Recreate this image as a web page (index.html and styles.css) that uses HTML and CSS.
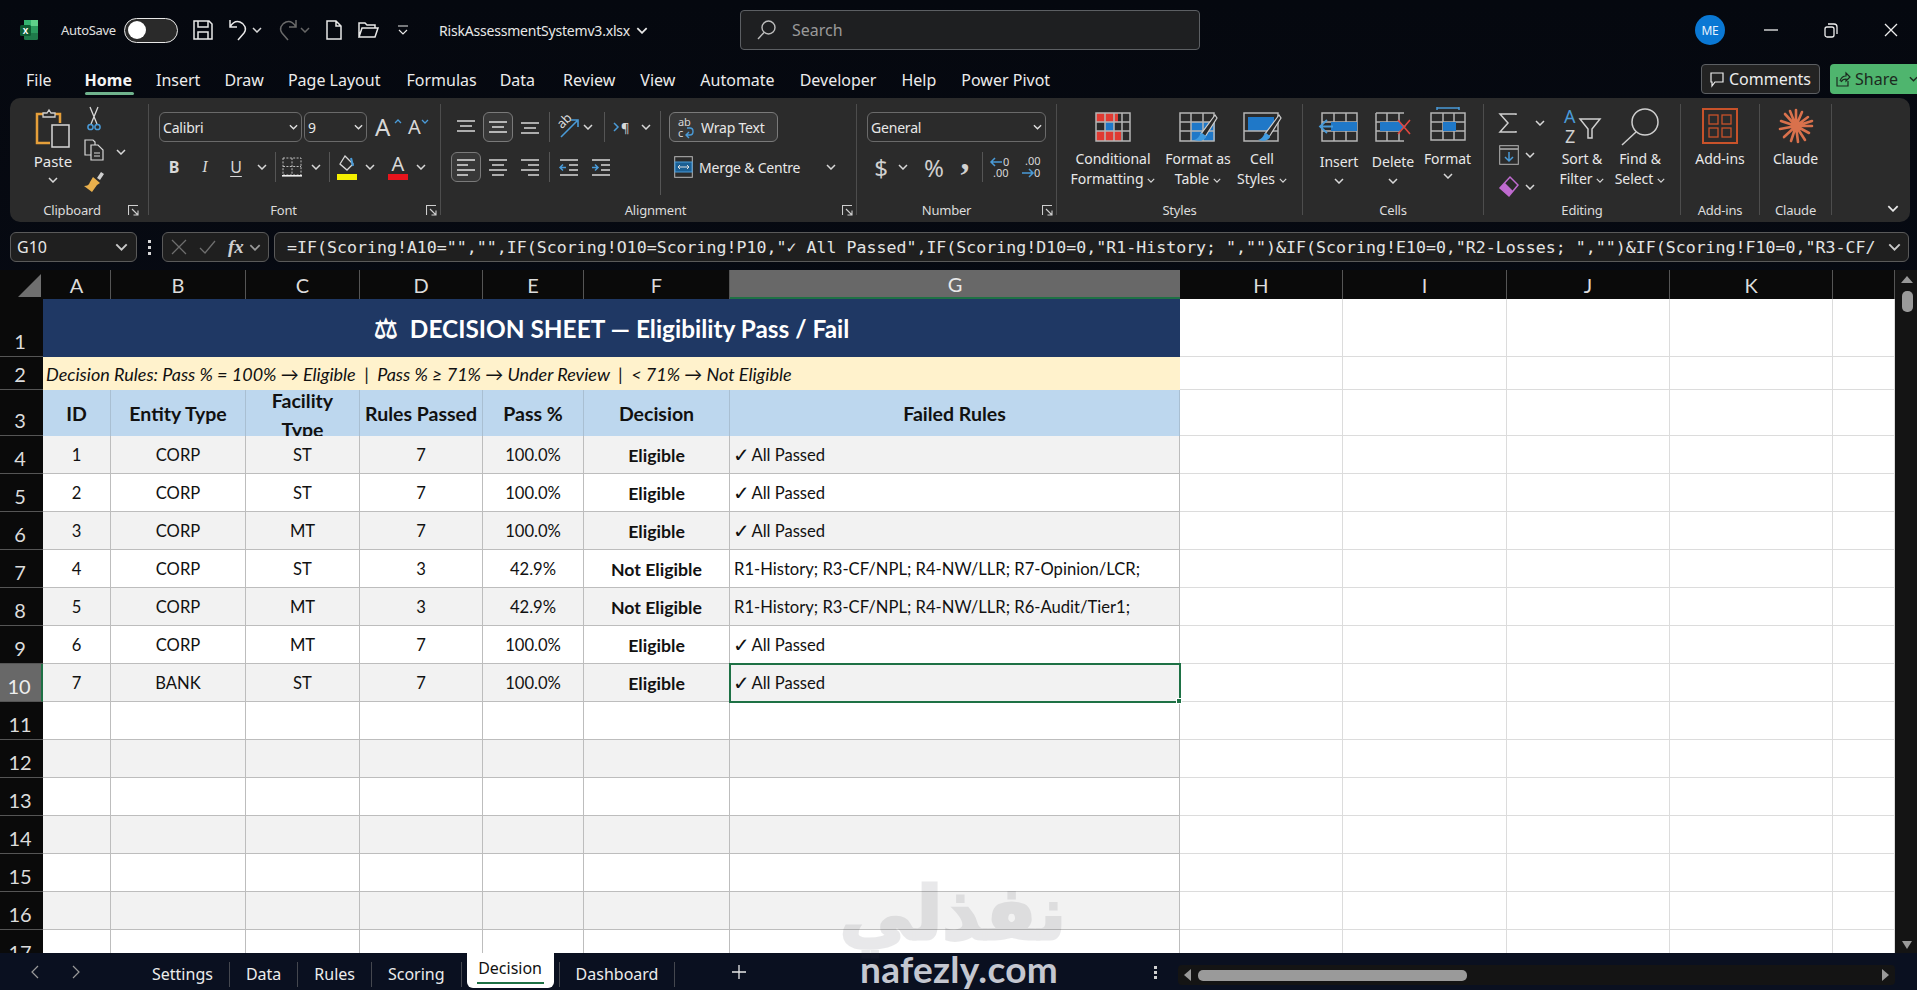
FILE: index.html
```html
<!DOCTYPE html>
<html lang="en">
<head>
<meta charset="utf-8">
<title>RiskAssessmentSystemv3.xlsx - Excel</title>
<link rel="stylesheet" href="styles.css">
</head>
<body>
<svg class="defs" width="0" height="0" aria-hidden="true">
  <symbol id="cv" viewBox="0 0 10 6"><path d="M1 1l4 4 4-4" fill="none" stroke="currentColor" stroke-width="1.5"/></symbol>
  <symbol id="launch" viewBox="0 0 11 11"><path d="M.5 10V.5H10M4 4l6 6M10 5.5V10H5.5" fill="none" stroke="#cfcfcf" stroke-width="1.1"/></symbol>
</svg>
<div class="app">
  <header class="titlebar">
    <div class="tb-left">
      <svg class="logo" width="18" height="20" viewBox="0 0 18 20"><rect x="4" y="0" width="14" height="20" rx="1.5" fill="#1f7a4a"/><rect x="4" y="0" width="7" height="6" fill="#33b36f"/><rect x="11" y="0" width="7" height="6" fill="#5fd08a"/><rect x="11" y="6" width="7" height="7" fill="#2b9a5e"/><rect x="0" y="5" width="11" height="11" rx="1.5" fill="#0d5c33"/><text x="5.5" y="14" class="logo-x">x</text></svg>
      <span class="autosave">AutoSave</span>
      <span class="toggle"><span class="knob"></span></span>
      <svg class="ml15" width="20" height="20" viewBox="0 0 20 20" fill="none" stroke="#e8e8e8" stroke-width="1.5"><path d="M1 1h15l3 3v15H1zM5 1v6h10V1M5 19v-7h10v7"/></svg>
      <svg class="ml16" width="20" height="22" viewBox="0 0 20 22" fill="none" stroke="#e8e8e8" stroke-width="1.5"><path d="M1 1v7h7M1 8c3-5 7-6 10-5 5 2 7 7 4 11l-6 7"/></svg>
      <svg class="cv ml3" width="10" height="6"><use href="#cv"/></svg>
      <svg class="ml15" width="20" height="22" viewBox="0 0 20 22" fill="none" stroke="#6a6a6a" stroke-width="1.5"><path d="M19 1v7h-7M19 8c-3-5-7-6-10-5C4 5 2 10 5 14l6 7"/></svg>
      <svg class="cv dim ml3" width="10" height="6"><use href="#cv"/></svg>
      <svg class="ml16" width="16" height="20" viewBox="0 0 16 20" fill="none" stroke="#e8e8e8" stroke-width="1.5"><path d="M1 1h9l5 5v13H1zM10 1v5h5"/></svg>
      <svg class="ml16" width="21" height="16" viewBox="0 0 21 16" fill="none" stroke="#e8e8e8" stroke-width="1.5"><path d="M1 15V1h6l2 2h8v3M1 15l3-9h16l-3 9z"/></svg>
      <svg class="ml18" width="12" height="10" viewBox="0 0 12 10" fill="none" stroke="#e8e8e8" stroke-width="1.2"><path d="M1 1h10M2 5l4 4 4-4"/></svg>
      <span class="filename">RiskAssessmentSystemv3.xlsx</span>
      <svg class="cv-file" width="12" height="7"><use href="#cv"/></svg>
    </div>
    <div class="search">
      <svg width="19" height="20" viewBox="0 0 19 20" fill="none" stroke="#bdbdbd" stroke-width="1.4"><circle cx="11.5" cy="7.5" r="6.5"/><path d="M7 12.5L1 19"/></svg>
      <span>Search</span>
    </div>
    <div class="tb-right">
      <span class="avatar">ME</span>
      <svg class="win" width="14" height="2" viewBox="0 0 14 2"><path d="M0 1h14" stroke="#eee" stroke-width="1.3"/></svg>
      <svg class="win" width="14" height="15" viewBox="0 0 14 15" fill="none" stroke="#eee" stroke-width="1.3"><rect x="1" y="4" width="9" height="10" rx="2"/><path d="M4 1h6a3 3 0 0 1 3 3v7"/></svg>
      <svg class="win" width="14" height="14" viewBox="0 0 14 14" stroke="#eee" stroke-width="1.3"><path d="M1 1l12 12M13 1L1 13"/></svg>
    </div>
  </header>

  <nav class="tabs">
    <a class="tab file">File</a>
    <a class="tab on">Home</a>
    <a class="tab tight">Insert</a>
    <a class="tab tight">Draw</a>
    <a class="tab loose">Page Layout</a>
    <a class="tab tight2">Formulas</a>
    <a class="tab loose3">Data</a>
    <a class="tab">Review</a>
    <a class="tab">View</a>
    <a class="tab">Automate</a>
    <a class="tab">Developer</a>
    <a class="tab">Help</a>
    <a class="tab">Power Pivot</a>
    <button class="comments"><svg width="14" height="15" viewBox="0 0 14 15" fill="none" stroke="#eee" stroke-width="1.2"><path d="M1 1h12v9H5l-3 4v-4H1z"/></svg>Comments</button>
    <button class="share"><svg width="14" height="15" viewBox="0 0 14 15" fill="none" stroke="#1c2a20" stroke-width="1.2"><path d="M1 5v9h11V9M4 9c1-3 3-5 6-5V1l4 4-4 4V7c-2 0-4 1-5 3"/></svg>Share<svg class="cv ml6" width="9" height="6"><use href="#cv"/></svg></button>
  </nav>

  <section class="ribbon">
    <div class="grp g-clip">
      <div class="body clip-body">
        <div class="big paste">
          <svg width="36" height="40" viewBox="0 0 36 40" fill="none"><path d="M10 6H2v29h13" stroke="#e59f3a" stroke-width="2.5"/><path d="M20 6h5v9" stroke="#e59f3a" stroke-width="2.5"/><path d="M8 9V5h4l2-3 2 3h4v4z" stroke="#cfcfcf" stroke-width="1.3" fill="#2b2b2b"/><rect x="17" y="17" width="17" height="22" stroke="#d8d8d8" stroke-width="1.5" fill="#2b2b2b"/></svg>
          <span class="t paste-t">Paste</span>
          <svg class="cv" width="10" height="6"><use href="#cv"/></svg>
        </div>
        <div class="clip-tools">
          <div class="line"><svg class="tool" width="14" height="26" viewBox="0 0 14 26" fill="none"><path d="M3 1l7 17M11 1L4 18" stroke="#d8d8d8" stroke-width="1.3"/><circle cx="3.5" cy="21" r="2.6" stroke="#4a9bd8" stroke-width="1.5"/><circle cx="10.5" cy="21" r="2.6" stroke="#4a9bd8" stroke-width="1.5"/></svg></div>
          <div class="line"><svg class="tool" width="20" height="22" viewBox="0 0 20 22" fill="none" stroke="#d8d8d8" stroke-width="1.2"><path d="M7 16H1V1h8l2 2v3"/><path d="M7 6h7l5 5v10H7zM10 14h6M10 17h6"/></svg><svg class="cv ml10 copy-cv" width="10" height="6"><use href="#cv"/></svg></div>
          <div class="line"><svg class="tool" width="20" height="22" viewBox="0 0 20 22"><path d="M13 8l4-6 3 2-4 6z" fill="#cfcfcf"/><path d="M9 7l7 6-3 2-5 7-8-6c3 0 5-1 6-4z" fill="#e9b04c"/></svg></div>
        </div>
      </div>
      <div class="label"><span>Clipboard</span><svg class="launch" width="11" height="11"><use href="#launch"/></svg></div>
    </div>

    <div class="grp g-font">
      <div class="body rows font-body">
        <div class="row1">
          <div class="combo c-name"><span>Calibri</span><svg class="cv" width="9" height="6"><use href="#cv"/></svg></div>
          <div class="combo c-size"><span>9</span><svg class="cv" width="9" height="6"><use href="#cv"/></svg></div>
          <span class="glyph-a big-a">A<svg class="caret" width="8" height="5" viewBox="0 0 8 5"><path d="M1 4l3-3 3 3" fill="none" stroke="#4a9bd8" stroke-width="1.3"/></svg></span>
          <span class="glyph-a small-a">A<svg class="caret" width="8" height="5" viewBox="0 0 8 5"><path d="M1 1l3 3 3-3" fill="none" stroke="#4a9bd8" stroke-width="1.3"/></svg></span>
        </div>
        <div class="row1 row-tools">
          <span class="tb bold">B</span>
          <span class="tb ital">I</span>
          <span class="tb under">U</span>
          <svg class="cv ml5" width="10" height="6"><use href="#cv"/></svg>
          <i class="vs ml8"></i>
          <span class="tb"><svg width="20" height="20" viewBox="0 0 20 20" fill="none" stroke="#bdbdbd" stroke-dasharray="2 1.4"><rect x="1" y="1" width="18" height="17"/><path d="M10 1v17M1 9.5h18"/><path d="M0 18.8h20" stroke="#eee" stroke-dasharray="none" stroke-width="1.6"/></svg></span>
          <svg class="cv ml3" width="10" height="6"><use href="#cv"/></svg>
          <i class="vs ml8"></i>
          <span class="tb ml1"><svg width="20" height="25" viewBox="0 0 20 25"><path d="M8 1l8 8-6 6-7-6z" fill="none" stroke="#d8d8d8" stroke-width="1.3"/><path d="M14 3l2 8" stroke="#4a9bd8" stroke-width="2"/><rect y="19" width="20" height="6" fill="#f5ef00"/></svg></span>
          <svg class="cv ml2" width="10" height="6"><use href="#cv"/></svg>
          <span class="tb ml8 font-color">A<i class="redbar"></i></span>
          <svg class="cv ml2" width="10" height="6"><use href="#cv"/></svg>
        </div>
      </div>
      <div class="label label-font"><span>Font</span><svg class="launch" width="11" height="11"><use href="#launch"/></svg></div>
    </div>

    <div class="grp g-align">
      <div class="body align-body">
        <div class="rows align-left">
          <div class="row1">
            <span class="tb"><svg width="18" height="14" viewBox="0 0 18 14" stroke="#d8d8d8" stroke-width="1.6"><path d="M0 1h18M3 6h12M0 11h18"/></svg></span>
            <span class="tb boxed"><svg width="18" height="14" viewBox="0 0 18 14" stroke="#e0e0e0" stroke-width="1.6"><path d="M0 2h18M3 7h12M0 12h18"/></svg></span>
            <span class="tb"><svg class="down" width="18" height="14" viewBox="0 0 18 14" stroke="#d8d8d8" stroke-width="1.6"><path d="M0 3h18M3 8h12M0 13h18"/></svg></span>
            <i class="vs"></i>
            <span class="tb"><svg width="22" height="24" viewBox="0 0 22 24" fill="none"><text x="0" y="11" class="mini" transform="rotate(-45 6 8)">ab</text><path d="M3 22L19 6M13 5h7v7" stroke="#4a9bd8" stroke-width="1.6"/></svg></span>
            <svg class="cv orient-cv" width="10" height="6"><use href="#cv"/></svg>
            <i class="vs wide"></i>
            <span class="tb"><svg width="22" height="14" viewBox="0 0 22 14" fill="none"><path d="M1 3l4 4-4 4" stroke="#4a9bd8" stroke-width="1.5"/><text x="8" y="13" class="mini">¶</text></svg></span>
            <svg class="cv" width="10" height="6"><use href="#cv"/></svg>
          </div>
          <div class="row1">
            <span class="tb boxed"><svg width="18" height="18" viewBox="0 0 18 18" stroke="#e0e0e0" stroke-width="1.6"><path d="M0 2h18M0 7h11M0 12h18M0 17h11"/></svg></span>
            <span class="tb"><svg width="18" height="18" viewBox="0 0 18 18" stroke="#d8d8d8" stroke-width="1.6"><path d="M0 2h18M3 7h12M0 12h18M3 17h12"/></svg></span>
            <span class="tb"><svg width="18" height="18" viewBox="0 0 18 18" stroke="#d8d8d8" stroke-width="1.6"><path d="M0 2h18M7 7h11M0 12h18M7 17h11"/></svg></span>
            <i class="vs"></i>
            <span class="tb"><svg width="18" height="18" viewBox="0 0 18 18" fill="none" stroke-width="1.5"><path d="M0 2h18M9 7h9M9 12h9M0 17h18" stroke="#d8d8d8"/><path d="M6 9.5H0M3 6.5L0 9.500l3 3" stroke="#4a9bd8"/></svg></span>
            <span class="tb"><svg width="18" height="18" viewBox="0 0 18 18" fill="none" stroke-width="1.5"><path d="M0 2h18M9 7h9M9 12h9M0 17h18" stroke="#d8d8d8"/><path d="M0 9.500h6M3 6.500l3 3-3 3" stroke="#4a9bd8"/></svg></span>
          </div>
        </div>
        <div class="rows align-right">
          <div class="wrap-btn"><svg width="18" height="21" viewBox="0 0 18 21" fill="none"><text x="1" y="9" class="mini-s">ab</text><text x="1" y="20" class="mini-s">c</text><path d="M9 18h4c4 0 4-7 0-7H10M12 15l-3 3 3 3" stroke="#4a9bd8" stroke-width="1.4"/></svg><span>Wrap Text</span></div>
          <div class="merge"><svg width="19" height="22" viewBox="0 0 19 22" fill="none"><rect x=".7" y=".7" width="17.600" height="20.600" stroke="#b9b9b9"/><rect x="1" y="6" width="17" height="10" fill="#1b5f93" stroke="#4a9bd8"/><path d="M4 11h11M6 9l-2 2 2 2M13 9l2 2-2 2" stroke="#e0e0e0"/></svg><span>Merge &amp; Centre</span><svg class="cv merge-cv" width="10" height="6"><use href="#cv"/></svg></div>
        </div>
      </div>
      <div class="label label-align"><span>Alignment</span><svg class="launch" width="11" height="11"><use href="#launch"/></svg></div>
    </div>

    <div class="grp g-num">
      <div class="body rows num-body">
        <div class="combo c-gen"><span>General</span><svg class="cv" width="9" height="6"><use href="#cv"/></svg></div>
        <div class="row1 num-tools">
          <span class="tb sym">$</span>
          <svg class="cv" width="10" height="6"><use href="#cv"/></svg>
          <span class="tb sym ml6">%</span>
          <span class="tb sym comma">,</span>
          <i class="vs"></i>
          <span class="tb dec"><svg width="20" height="24" viewBox="0 0 20 24" fill="none"><path d="M12 7H2M5 3L1 7l4 4" stroke="#4a9bd8" stroke-width="1.5"/><text x="13" y="11" class="mini-s">0</text><text x="3" y="22" class="mini-s">.00</text></svg></span>
          <span class="tb dec"><svg width="20" height="24" viewBox="0 0 20 24" fill="none"><text x="4" y="10" class="mini-s">.00</text><path d="M1 18h10M8 14l4 4-4 4" stroke="#4a9bd8" stroke-width="1.5"/><text x="13" y="22" class="mini-s">0</text></svg></span>
        </div>
      </div>
      <div class="label label-num"><span>Number</span><svg class="launch" width="11" height="11"><use href="#launch"/></svg></div>
    </div>

    <div class="grp g-styles">
      <div class="body big-body styles-body">
        <div class="big"><svg width="36" height="30" viewBox="0 0 36 30"><g fill="#e03a32"><rect x="1" y="1" width="22" height="9"/><rect x="1" y="19" width="25" height="10"/></g><rect x="10" y="10" width="9" height="9" fill="#1f78c8"/><path d="M1 1h34v28H1zM10 1v28M19 1v28M27 1v28M1 10h34M1 19h34" fill="none" stroke="#b5b5b5" stroke-width="1.5"/></svg>
          <span class="t">Conditional</span><span class="t">Formatting<svg class="cv ml4" width="8" height="5"><use href="#cv"/></svg></span></div>
        <div class="big"><svg width="38" height="30" viewBox="0 0 38 30"><rect x="12" y="10" width="24" height="19" fill="#1f78c8"/><path d="M1 1h34v28H1zM12 1v28M24 1v28M1 10h34M1 19h34" fill="none" stroke="#b5b5b5" stroke-width="1.5"/><path d="M36 3L22 22l4 3L38 6z" fill="#2b2b2b" stroke="#cfcfcf" stroke-width="1.2"/><path d="M23 21c-3 1-2 5-8 7 6 2 12 0 12-4z" fill="#3f9be0"/></svg>
          <span class="t">Format as</span><span class="t">Table<svg class="cv ml4" width="8" height="5"><use href="#cv"/></svg></span></div>
        <div class="big"><svg width="38" height="30" viewBox="0 0 38 30"><rect x="5" y="5" width="26" height="14" fill="#1f78c8"/><path d="M1 1h34v28H1zM1 19h34" fill="none" stroke="#b5b5b5" stroke-width="1.5"/><path d="M36 3L22 22l4 3L38 6z" fill="#2b2b2b" stroke="#cfcfcf" stroke-width="1.2"/><path d="M23 21c-3 1-2 5-8 7 6 2 12 0 12-4z" fill="#3f9be0"/></svg>
          <span class="t">Cell</span><span class="t">Styles<svg class="cv ml4" width="8" height="5"><use href="#cv"/></svg></span></div>
      </div>
      <div class="label label-c"><span>Styles</span></div>
    </div>

    <div class="grp g-cells">
      <div class="body big-body cells-body">
        <div class="big"><svg width="40" height="30" viewBox="0 0 40 30"><path d="M3 1h35v28H3zM15 1v28M27 1v28M3 10h35M3 19h35" fill="none" stroke="#b5b5b5" stroke-width="1.5"/><rect x="12" y="10" width="26" height="9" fill="#1f78c8"/><path d="M14 14.500H1M8 8l-7 6.500L8 21" fill="none" stroke="#4a9bd8" stroke-width="1.800"/></svg>
          <span class="t t-low">Insert</span><svg class="cv" width="10" height="6"><use href="#cv"/></svg></div>
        <div class="big"><svg width="36" height="30" viewBox="0 0 36 30"><path d="M1 1h28M1 1v28h28M12 1v28M24 1v8M24 21v8M1 10h24M1 19h24" fill="none" stroke="#b5b5b5" stroke-width="1.5"/><path d="M5 10h19l7 4.500-7 4.500H5z" fill="#1f78c8"/><path d="M23 8l12 14M35 8L23 22" stroke="#e0473f" stroke-width="1.600"/></svg>
          <span class="t t-low">Delete</span><svg class="cv" width="10" height="6"><use href="#cv"/></svg></div>
        <div class="big fmt"><svg width="36" height="34" viewBox="0 0 36 34"><path d="M7 1h22M7 0v3M29 0v3" stroke="#4a9bd8" stroke-width="1.500"/><path d="M1 6h34v27H1zM13 6v27M24 6v27M1 15h34M1 24h34" fill="none" stroke="#b5b5b5" stroke-width="1.500"/><rect x="13" y="15" width="13" height="9" fill="#1f78c8"/></svg>
          <span class="t">Format</span><svg class="cv" width="10" height="6"><use href="#cv"/></svg></div>
      </div>
      <div class="label label-c"><span>Cells</span></div>
    </div>

    <div class="grp g-edit">
      <div class="body edit-body">
        <div class="edit-tools">
          <div class="line l-sum"><svg width="18" height="20" viewBox="0 0 18 20" fill="none" stroke="#cfcfcf" stroke-width="1.500"><path d="M17 2V1H1l8 9-8 9h16v-1"/></svg><svg class="cv ml18" width="10" height="6"><use href="#cv"/></svg></div>
          <div class="line"><svg width="20" height="20" viewBox="0 0 20 20" fill="none"><rect x=".7" y=".7" width="18.600" height="18.600" stroke="#b5b5b5"/><path d="M1 4h18" stroke="#b5b5b5" stroke-width="1.500"/><path d="M10 7v9M6 12l4 4 4-4" stroke="#4a9bd8" stroke-width="1.500"/></svg><svg class="cv ml6" width="10" height="6"><use href="#cv"/></svg></div>
          <div class="line"><svg width="20" height="22" viewBox="0 0 20 22"><path d="M11 1l8 8-9 11-9-8z" fill="none" stroke="#c06bd0" stroke-width="1.500"/><path d="M6 7l8 8-4 5-9-8z" fill="#c06bd0"/></svg><svg class="cv ml6" width="10" height="6"><use href="#cv"/></svg></div>
        </div>
        <div class="big sort"><svg width="38" height="36" viewBox="0 0 38 36" fill="none"><text x="1" y="15" class="az blue">A</text><text x="2" y="35" class="az">Z</text><path d="M17 11h20l-8 10v9h-4v-9z" stroke="#cfcfcf" stroke-width="1.500"/></svg>
          <span class="t">Sort &amp;</span><span class="t">Filter<svg class="cv ml4" width="8" height="5"><use href="#cv"/></svg></span></div>
        <div class="big find"><svg width="38" height="38" viewBox="0 0 38 38" fill="none" stroke="#cfcfcf" stroke-width="1.500"><circle cx="24" cy="14" r="13"/><path d="M15 24L1 37"/></svg>
          <span class="t">Find &amp;</span><span class="t">Select<svg class="cv ml4" width="8" height="5"><use href="#cv"/></svg></span></div>
      </div>
      <div class="label label-c"><span>Editing</span></div>
    </div>

    <div class="grp g-add">
      <div class="body big-body center-body">
        <div class="big"><svg width="36" height="36" viewBox="0 0 36 36" fill="none" stroke="#c8522a" stroke-width="2"><rect x="1" y="1" width="34" height="34"/><rect x="7" y="7" width="9" height="9" stroke-width="1.300"/><rect x="20" y="7" width="9" height="9" stroke-width="1.300"/><rect x="7" y="20" width="9" height="9" stroke-width="1.300"/><rect x="20" y="20" width="9" height="9" stroke-width="1.300"/></svg>
          <span class="t">Add-ins</span></div>
      </div>
      <div class="label label-c"><span>Add-ins</span></div>
    </div>

    <div class="grp g-claude">
      <div class="body big-body center-body">
        <div class="big"><svg width="36" height="36" viewBox="0 0 36 36" stroke="#d9714c" stroke-width="2.600" stroke-linecap="round"><path d="M18 18V2M18 18l6-14M18 18l12-9M18 18l16-5M18 18h16M18 18l13 7M18 18l9 14M18 18l2 16M18 18l-5 15M18 18L6 29M18 18L2 21M18 18L3 13M18 18L7 6M18 18L12 3"/></svg>
          <span class="t">Claude</span></div>
      </div>
      <div class="label label-c"><span>Claude</span></div>
    </div>

    <div class="collapse"><svg width="12" height="7"><use href="#cv"/></svg></div>
  </section>

  <section class="fbar">
    <div class="namebox"><span>G10</span><svg width="13" height="8"><use href="#cv"/></svg></div>
    <div class="fdots"><i></i><i></i><i></i></div>
    <div class="fxbox">
      <svg width="16" height="16" viewBox="0 0 16 16" stroke="#6e6e6e" stroke-width="1.300"><path d="M1 1l14 14M15 1L1 15"/></svg>
      <svg width="17" height="14" viewBox="0 0 17 14" fill="none" stroke="#6e6e6e" stroke-width="1.300"><path d="M1 8l5 5L16 1"/></svg>
      <span class="fx">fx</span>
      <svg class="fxcv" width="12" height="7"><use href="#cv"/></svg>
    </div>
    <div class="formula"><span>=IF(Scoring!A10="","",IF(Scoring!O10=Scoring!P10,"✓ All Passed",IF(Scoring!D10=0,"R1-History; ","")&amp;IF(Scoring!E10=0,"R2-Losses; ","")&amp;IF(Scoring!F10=0,"R3-CF/</span><svg width="13" height="8"><use href="#cv"/></svg></div>
  </section>

  <main class="sheetwrap">
    <div class="sheet">
      <div class="row r-col">
        <div class="corner"><svg width="23" height="23" viewBox="0 0 23 23"><path d="M23 0v23H0z" fill="#6f6f6f"/></svg></div>
        <div class="ch">A</div><div class="ch">B</div><div class="ch">C</div><div class="ch">D</div><div class="ch">E</div><div class="ch">F</div><div class="ch sel">G</div><div class="ch">H</div><div class="ch">I</div><div class="ch">J</div><div class="ch">K</div><div class="ch"></div>
      </div>
      <div class="row r1">
        <div class="rh">1</div><div class="c merged title"><span class="scale">⚖</span> DECISION SHEET — Eligibility Pass / Fail</div>
        <div class="o"></div><div class="o"></div><div class="o"></div><div class="o"></div><div class="o"></div>
      </div>
      <div class="row r2">
        <div class="rh">2</div><div class="c merged note">Decision Rules: Pass % = 100% → Eligible &nbsp;|&nbsp; Pass % ≥ 71% → Under Review &nbsp;|&nbsp; &lt; 71% → Not Eligible</div>
        <div class="o"></div><div class="o"></div><div class="o"></div><div class="o"></div><div class="o"></div>
      </div>
      <div class="row r3">
        <div class="rh">3</div><div class="c h">ID</div><div class="c h">Entity Type</div><div class="c h wrapcell"><span>Facility Type</span></div><div class="c h">Rules Passed</div><div class="c h">Pass %</div><div class="c h">Decision</div><div class="c h">Failed Rules</div>
        <div class="o"></div><div class="o"></div><div class="o"></div><div class="o"></div><div class="o"></div>
      </div>
      <div class="row d alt"><div class="rh">4</div><div class="c">1</div><div class="c">CORP</div><div class="c">ST</div><div class="c">7</div><div class="c">100.0%</div><div class="c b">Eligible</div><div class="c l"><span class="chk">✓</span> All Passed</div><div class="o"></div><div class="o"></div><div class="o"></div><div class="o"></div><div class="o"></div></div>
      <div class="row d"><div class="rh">5</div><div class="c">2</div><div class="c">CORP</div><div class="c">ST</div><div class="c">7</div><div class="c">100.0%</div><div class="c b">Eligible</div><div class="c l"><span class="chk">✓</span> All Passed</div><div class="o"></div><div class="o"></div><div class="o"></div><div class="o"></div><div class="o"></div></div>
      <div class="row d alt"><div class="rh">6</div><div class="c">3</div><div class="c">CORP</div><div class="c">MT</div><div class="c">7</div><div class="c">100.0%</div><div class="c b">Eligible</div><div class="c l"><span class="chk">✓</span> All Passed</div><div class="o"></div><div class="o"></div><div class="o"></div><div class="o"></div><div class="o"></div></div>
      <div class="row d"><div class="rh">7</div><div class="c">4</div><div class="c">CORP</div><div class="c">ST</div><div class="c">3</div><div class="c">42.9%</div><div class="c b">Not Eligible</div><div class="c l">R1-History; R3-CF/NPL; R4-NW/LLR; R7-Opinion/LCR;</div><div class="o"></div><div class="o"></div><div class="o"></div><div class="o"></div><div class="o"></div></div>
      <div class="row d alt"><div class="rh">8</div><div class="c">5</div><div class="c">CORP</div><div class="c">MT</div><div class="c">3</div><div class="c">42.9%</div><div class="c b">Not Eligible</div><div class="c l">R1-History; R3-CF/NPL; R4-NW/LLR; R6-Audit/Tier1;</div><div class="o"></div><div class="o"></div><div class="o"></div><div class="o"></div><div class="o"></div></div>
      <div class="row d"><div class="rh">9</div><div class="c">6</div><div class="c">CORP</div><div class="c">MT</div><div class="c">7</div><div class="c">100.0%</div><div class="c b">Eligible</div><div class="c l"><span class="chk">✓</span> All Passed</div><div class="o"></div><div class="o"></div><div class="o"></div><div class="o"></div><div class="o"></div></div>
      <div class="row d alt"><div class="rh sel-rh">10</div><div class="c">7</div><div class="c">BANK</div><div class="c">ST</div><div class="c">7</div><div class="c">100.0%</div><div class="c b">Eligible</div><div class="c l active"><span class="chk">✓</span> All Passed</div><div class="o"></div><div class="o"></div><div class="o"></div><div class="o"></div><div class="o"></div></div>
      <div class="row d"><div class="rh">11</div><div class="c"></div><div class="c"></div><div class="c"></div><div class="c"></div><div class="c"></div><div class="c"></div><div class="c"></div><div class="o"></div><div class="o"></div><div class="o"></div><div class="o"></div><div class="o"></div></div>
      <div class="row d alt"><div class="rh">12</div><div class="c"></div><div class="c"></div><div class="c"></div><div class="c"></div><div class="c"></div><div class="c"></div><div class="c"></div><div class="o"></div><div class="o"></div><div class="o"></div><div class="o"></div><div class="o"></div></div>
      <div class="row d"><div class="rh">13</div><div class="c"></div><div class="c"></div><div class="c"></div><div class="c"></div><div class="c"></div><div class="c"></div><div class="c"></div><div class="o"></div><div class="o"></div><div class="o"></div><div class="o"></div><div class="o"></div></div>
      <div class="row d alt"><div class="rh">14</div><div class="c"></div><div class="c"></div><div class="c"></div><div class="c"></div><div class="c"></div><div class="c"></div><div class="c"></div><div class="o"></div><div class="o"></div><div class="o"></div><div class="o"></div><div class="o"></div></div>
      <div class="row d"><div class="rh">15</div><div class="c"></div><div class="c"></div><div class="c"></div><div class="c"></div><div class="c"></div><div class="c"></div><div class="c"></div><div class="o"></div><div class="o"></div><div class="o"></div><div class="o"></div><div class="o"></div></div>
      <div class="row d alt"><div class="rh">16</div><div class="c"></div><div class="c"></div><div class="c"></div><div class="c"></div><div class="c"></div><div class="c"></div><div class="c"></div><div class="o"></div><div class="o"></div><div class="o"></div><div class="o"></div><div class="o"></div></div>
      <div class="row d"><div class="rh">17</div><div class="c"></div><div class="c"></div><div class="c"></div><div class="c"></div><div class="c"></div><div class="c"></div><div class="c"></div><div class="o"></div><div class="o"></div><div class="o"></div><div class="o"></div><div class="o"></div></div>
    </div>
    <aside class="vscroll">
      <i class="tri up"></i>
      <i class="vthumb"></i>
      <i class="tri dn"></i>
    </aside>
  </main>

  <footer class="statusbar">
    <div class="nav"><svg width="8" height="14" viewBox="0 0 8 14" fill="none" stroke="#9a9a9a" stroke-width="1.200"><path d="M7 1L1 7l6 6"/></svg><svg width="8" height="14" viewBox="0 0 8 14" fill="none" stroke="#9a9a9a" stroke-width="1.200"><path d="M1 1l6 6-6 6"/></svg></div>
    <div class="sheets">
      <span class="st">Settings</span><span class="st">Data</span><span class="st">Rules</span><span class="st">Scoring</span><span class="st cur">Decision</span><span class="st dash">Dashboard</span>
    </div>
    <svg class="plus" width="14" height="14" viewBox="0 0 14 14" stroke="#e8e8e8" stroke-width="1.300"><path d="M7 0v14M0 7h14"/></svg>
    <div class="hdots"><i></i><i></i><i></i></div>
    <div class="hscroll"><i class="tri lf"></i><i class="hthumb"></i><i class="tri rt"></i></div>
  </footer>

  <div class="wm-ar" lang="ar" dir="rtl">نفذلي</div>
  <div class="wm-en">nafezly.com</div>
</div>
</body>
</html>
```
FILE: styles.css
```css
* { box-sizing: border-box; }
html, body { margin: 0; height: 100%; overflow: hidden; background: #070a12; }
body { font-family: "Noto Sans", "Liberation Sans", sans-serif; color: #e8e8e8; }
.defs { position: absolute; }
svg { display: block; flex: none; overflow: visible; }
.app { position: relative; width: 1917px; height: 990px; display: flex; flex-direction: column; overflow: hidden; background: linear-gradient(#05080f, #0a0e1a); }
.cv { color: #d8d8d8; }
.cv.dim { color: #666; }
.ml1 { margin-left: 1px; } .ml2 { margin-left: 2px; } .ml3 { margin-left: 3px; } .ml4 { margin-left: 4px; display: inline-block; vertical-align: middle; } .ml5 { margin-left: 5px; } .ml6 { margin-left: 6px; } .ml8 { margin-left: 8px; } .ml10 { margin-left: 10px; } .ml15 { margin-left: 15px; } .ml16 { margin-left: 16px; } .ml18 { margin-left: 18px; }

/* title bar */
.titlebar { height: 60px; display: flex; align-items: center; flex: none; }
.tb-left { width: 740px; display: flex; align-items: center; padding-left: 20px; }
.logo-x { font: 700 10px "Liberation Sans", sans-serif; fill: #fff; text-anchor: middle; }
.autosave { margin-left: 23px; font-size: 13px; letter-spacing: -.3px; width: 55px; white-space: nowrap; color: #e0e0e0; }
.toggle { margin-left: 8px; width: 54px; height: 25px; border: 1.5px solid #e8e8e8; border-radius: 13px; background: #2a2a2a; display: flex; align-items: center; padding-left: 3px; }
.knob { width: 18px; height: 18px; border-radius: 50%; background: #fff; }
.filename { margin-left: 30px; font-size: 14px; letter-spacing: -.2px; white-space: nowrap; color: #e8e8e8; width: 191px; }
.cv-file { margin-left: 6px; color: #e8e8e8; }
.search { width: 460px; height: 40px; border: 1px solid #5c5f63; border-radius: 4px; background: #1e1f21; display: flex; align-items: center; gap: 16px; padding-left: 16px; font-size: 16px; color: #9a9a9a; margin-top: -1px; }
.tb-right { flex: 1; display: flex; align-items: center; padding-left: 495px; }
.avatar { width: 30px; height: 30px; border-radius: 50%; background: #0a78d4; font-size: 12px; display: flex; align-items: center; justify-content: center; color: #e8f3ff; letter-spacing: -.3px; }
.win:nth-child(2) { margin-left: 39px; }
.win:nth-child(3) { margin-left: 46px; }
.win:nth-child(4) { margin-left: 46px; }

/* tabs */
.tabs { height: 38px; flex: none; display: flex; align-items: center; gap: 25px; padding-left: 26px; }
.tab { font-size: 16px; color: #ececec; height: 38px; line-height: 41px; position: relative; white-space: nowrap; }
.tab.file { margin-right: 8px; }
.tab.on { font-weight: 700; color: #f4f4f4; margin-right: -1px; }
.tab.on::after { content: ""; position: absolute; left: 0; right: -2px; bottom: 3px; height: 3px; background: #6fb28d; border-radius: 2px; }
.tab.tight { margin-right: -1px; }
.tab.loose { margin-right: 1px; }
.tab.tight2 { margin-right: -2px; }
.tab.loose3 { margin-right: 3px; }
.comments { margin-left: auto; margin-right: -15px; width: 119px; height: 30px; background: #232323; border: 1px solid #5c5f63; border-radius: 4px; color: #ececec; font: 16px "Noto Sans", sans-serif; display: flex; align-items: center; justify-content: center; gap: 5px; padding: 0; }
.share { width: 87px; height: 30px; background: #4fb56e; border: 0; border-radius: 4px 0 0 4px; color: #1c2a20; font: 16px "Noto Sans", sans-serif; display: flex; align-items: center; gap: 5px; padding-left: 6px; }
.share .cv { color: #1c2a20; }

/* ribbon */
.ribbon { height: 124px; flex: none; margin: 0 7px 0 10px; background: #2b2b2b; border-radius: 10px; padding: 6px 0 7px; display: flex; position: relative; }
.grp { display: flex; flex-direction: column; border-right: 1px solid #4d4d4d; height: 111px; flex: none; }
.g-clip { width: 139px; } .g-font { width: 292px; } .g-align { width: 416px; } .g-num { width: 200px; } .g-styles { width: 246px; } .g-cells { width: 181px; } .g-edit { width: 197px; } .g-add { width: 79px; } .g-claude { width: 72px; }
.body { height: 99px; flex: none; }
.label { height: 15px; font-size: 13px; line-height: 15px; color: #dcdcdc; display: flex; align-items: center; letter-spacing: -.2px; white-space: nowrap; }
.label span { flex: 1; text-align: center; }
.launch { margin-right: 3px; }
.g-clip .label { padding-left: 30px; }
.g-clip .label span { flex: none; width: 64px; }
.g-clip .label .launch { margin-left: 24px; }
.label-font span { padding-right: 8px; }
.label-align { padding-left: 28px; }
.label-num span { padding-right: 6px; }

.t { font-size: 14px; line-height: 20px; letter-spacing: -.05px; color: #e8e8e8; white-space: nowrap; display: block; text-align: center; }
.big { display: flex; flex-direction: column; align-items: center; }
.big > svg:first-child { margin-top: 8px; margin-bottom: 7px; }
.big > .t + .cv { margin-top: 6px; }

.clip-body { display: flex; padding-left: 14px; }
.paste { width: 58px; }
.paste > svg:first-child { margin-top: 4px; margin-bottom: 3px; }
.paste-t { font-size: 15px; }
.paste .cv { margin-top: 6px; }
.clip-tools { display: flex; flex-direction: column; }
.line { height: 32px; display: flex; align-items: center; }
.clip-tools .line:first-child { height: 30px; }
.clip-tools .line:last-child { margin-top: -1px; }
.tool { margin: 0 2px; }
.clip-tools .line:first-child .tool { margin-left: 5px; }
.copy-cv { margin-top: 4px; }
.rows { display: flex; flex-direction: column; gap: 10px; padding-top: 8px; }
.row1 { display: flex; align-items: center; height: 30px; }
.combo { height: 30px; border: 1px solid #6a6a6a; border-radius: 6px; display: flex; align-items: center; justify-content: space-between; padding: 0 3px; font-size: 14px; letter-spacing: -.2px; }
.combo .cv { color: #e0e0e0; }
.font-body { padding-left: 10px; }
.c-name { width: 143px; }
.c-size { width: 63px; margin-left: 2px; }
.glyph-a { position: relative; color: #d8d8d8; display: block; line-height: 30px; }
.big-a { font-size: 24px; margin-left: 8px; width: 33px; }
.small-a { font-size: 20px; width: 22px; }
.caret { position: absolute; top: 7px; right: 6px; }
.small-a .caret { right: 1px; }
.tb { width: 30px; height: 30px; display: flex; align-items: center; justify-content: center; flex: none; color: #d8d8d8; position: relative; }
.boxed { border: 1px solid #7a7a7a; border-radius: 6px; background: #383838; }
.bold { font-weight: 700; font-size: 16px; }
.ital { font-style: italic; font-size: 16px; font-family: "Liberation Serif", serif; }
.under { font-size: 16px; text-decoration: underline; text-underline-offset: 3px; }
.row-tools .tb { margin-right: 1px; }
.row-tools .tb.ml1 { margin-left: 1px; }
.font-color { font-size: 20px; padding-bottom: 8px; }
.redbar { position: absolute; left: 5px; right: 5px; bottom: 2px; height: 6px; background: #e8141c; }
.vs { width: 1px; height: 30px; background: #555; display: block; flex: none; }
.row-tools .vs { margin-right: 1px; }
.align-body { display: flex; padding-left: 10px; }
.align-left { width: 210px; border-right: 1px solid #555; height: 84px; margin-top: 7px; padding-top: 1px; }
.align-left .row1 { gap: 2px; }
.align-left .row1 .vs { margin: 0 2px; }
.align-left .row1 .vs.wide { margin-left: 9px; }
.orient-cv { margin-left: -3px; }
.align-right { padding-left: 8px; padding-top: 8px; flex: 1; }
.wrap-btn { width: 109px; height: 30px; border: 1px solid #7a7a7a; border-radius: 6px; background: #383838; display: flex; align-items: center; gap: 6px; padding-left: 7px; font-size: 14px; letter-spacing: -.2px; }
.mini { font: 13px "Noto Sans", sans-serif; fill: #d8d8d8; }
.mini-s { font: 11px "Noto Sans", sans-serif; fill: #d8d8d8; }
.merge { display: flex; align-items: center; height: 30px; padding-left: 5px; font-size: 14px; letter-spacing: -.2px; gap: 6px; white-space: nowrap; }
.merge-cv { margin-left: 20px; }
.num-body { padding-left: 10px; }
.c-gen { width: 179px; }
.sym { font-size: 24px; color: #d0d0d0; width: 28px; }
.comma { font: 700 36px "Liberation Serif", serif; margin-left: 3px; margin-right: 3px; padding-bottom: 20px; }
.num-tools .cv { margin: 0 6px 0 3px; }
.dec { width: 28px; margin-left: 3px; }
.big-body { display: grid; align-items: start; }
.styles-body { grid-template-columns: 86px 84px 44px; padding-left: 13px; }
.cells-body { grid-template-columns: 54px 54px 55px; padding-left: 9px; }
.center-body { justify-content: center; }
.g-cells .t-low { margin-top: 2px; }
.g-cells .big > svg:first-child { margin-bottom: 8px; }
.g-cells .fmt > svg:first-child { margin-top: 3px; margin-bottom: 8px; }
.g-cells .fmt .cv { margin-top: 4px; }
.edit-body { display: grid; grid-template-columns: 54px 58px 58px; padding-left: 15px; }
.edit-tools { display: flex; flex-direction: column; padding-top: 3px; }
.edit-tools .line { height: 32px; }
.edit-body .sort > svg:first-child { margin-top: 4px; margin-bottom: 5px; }
.edit-body .find > svg:first-child { margin-top: 4px; margin-bottom: 3px; }
.az { font: 18px "Noto Sans", sans-serif; fill: #cfcfcf; }
.az.blue { fill: #4a9bd8; }
.g-add .big > svg:first-child, .g-claude .big > svg:first-child { margin-top: 4px; margin-bottom: 5px; }
.collapse { position: absolute; right: 11px; bottom: 10px; color: #e8e8e8; }

/* formula bar */
.fbar { height: 30px; flex: none; margin-top: 10px; display: flex; align-items: stretch; padding-left: 10px; }
.namebox, .fxbox, .formula { border: 1px solid #5a5a5a; border-radius: 6px; background: #1f1f1f; display: flex; align-items: center; }
.namebox { width: 127px; justify-content: space-between; padding: 0 8px 0 6px; font-size: 16px; }
.namebox svg, .formula svg { color: #c9c9c9; }
.fdots { width: 25px; display: flex; flex-direction: column; justify-content: center; align-items: center; gap: 3px; }
.fdots i { width: 3px; height: 3px; background: #d8d8d8; display: block; }
.fxbox { width: 107px; padding-left: 8px; gap: 12px; }
.fx { font: italic 700 19px "Liberation Serif", serif; color: #cfcfcf; width: 16px; }
.fxcv { color: #9a9a9a; margin-left: -7px; }
.formula { margin-left: 5px; width: 1635px; justify-content: space-between; padding: 0 7px 0 12px; font: 16.600px "DejaVu Sans Mono", "Liberation Mono", monospace; color: #e4e4e4; white-space: nowrap; overflow: hidden; }

/* sheet */
.sheetwrap { margin-top: 8px; height: 683px; flex: none; display: flex; }
.sheet { width: 1895px; height: 683px; overflow: hidden; flex: none; background: #fff; }
.row { display: grid; grid-template-columns: 43px 68px 135px 114px 123px 101px 146px 450px 163px 164px 163px 163px 62px; height: 38px; font-family: Lato, "DejaVu Sans", sans-serif; }
.r-col { height: 29px; background: #0a0a0a; }
.r1 { height: 58px; } .r2 { height: 33px; } .r3 { height: 46px; }
.corner { background: #0a0a0a; display: flex; align-items: flex-end; justify-content: flex-end; padding: 0 2px 2px 0; }
.ch { display: flex; align-items: center; justify-content: center; font-size: 20px; color: #dcdcdc; border-right: 1px solid #555; background: #0a0a0a; padding-top: 1px; }
.ch.sel { background: #686868; color: #e8e8e8; border-bottom: 2px solid #1e7145; border-right: 0; }
.rh { background: #0a0a0a; color: #dcdcdc; font-size: 20px; display: flex; align-items: flex-end; justify-content: center; line-height: 30px; border-bottom: 1px solid #555; overflow: hidden; padding-right: 3px; }
.sel-rh { background: #686868; color: #eee; border-right: 2px solid #1e7145; }
.c { display: flex; align-items: center; justify-content: center; border-right: 1px solid #bdbdbd; border-bottom: 1px solid #bdbdbd; font-size: 16.600px; color: #111; white-space: nowrap; overflow: hidden; background: #fff; padding-top: 1px; }
.alt .c { background: #f2f2f2; }
.o { border-right: 1px solid #dcdcdc; border-bottom: 1px solid #dcdcdc; background: #fff; }
.merged { grid-column: 2 / 9; border-right: 0; }
.title { background: #1f3864; color: #fff; font-weight: 700; font-size: 24.400px; border-bottom: 0; white-space: pre; }
.scale { font-family: "DejaVu Sans", sans-serif; font-size: 27px; margin-right: 6px; font-weight: 700; -webkit-text-stroke: .8px #fff; }
.note { background: #fff2cc; font-style: italic; font-size: 18px; justify-content: flex-start; padding-left: 3px; border-bottom: 0; }
.h { background: #bdd7ee; font-weight: 700; font-size: 19.500px; border-color: #a9bfd2; border-bottom: 0; }
.wrapcell { white-space: normal; text-align: center; line-height: 29px; padding: 3px 20px 0; }
.b { font-weight: 700; font-size: 17.700px; }
.l { justify-content: flex-start; padding-left: 4px; white-space: pre; }
.chk { font-family: "DejaVu Sans", sans-serif; font-size: 20px; line-height: 1; margin-right: -2px; margin-left: -1px; }
.active { overflow: visible; position: relative; outline: 2px solid #1e7145; outline-offset: -1px; z-index: 2; }
.active::after { content: ""; position: absolute; right: -3px; bottom: -3px; background: #1e7145; border: 1px solid #fff; box-sizing: content-box; width: 4px; height: 4px; }

.vscroll { width: 22px; height: 683px; background: #141414; position: relative; display: flex; flex-direction: column; align-items: center; padding: 6px 0 0 2px; }
.tri { display: block; width: 0; height: 0; flex: none; border-style: solid; border-color: transparent; }
.up { border-width: 0 6px 7px; border-bottom-color: #999; }
.vthumb { display: block; width: 11px; height: 21px; border-radius: 5px; background: #9a9a9a; margin-top: 8px; }
.dn { border-width: 8px 5px 0; border-top-color: #999; margin-top: auto; margin-bottom: 4px; }

/* status */
.statusbar { height: 37px; flex: none; display: flex; align-items: center; background: #0a1020; position: relative; }
.nav { display: flex; gap: 33px; width: 152px; padding-left: 31px; }
.sheets { display: flex; height: 37px; align-items: center; }
.st { font-size: 16px; padding: 0 16px; border-right: 1px solid #44474f; height: 25px; line-height: 25px; color: #ececec; margin-top: 6px; }
.st:first-child { padding-left: 0; }
.st.cur { background: #fff; color: #111; height: 35px; line-height: 31px; border: 0; border-radius: 0 0 6px 6px; position: relative; margin-top: -2px; padding: 0 11px; width: 87px; margin-left: 5px; text-align: center; }
.st.cur::after { content: ""; position: absolute; left: 10px; right: 10px; bottom: 4px; height: 2px; background: #1e7145; }
.st.dash { margin-left: 5px; border-left: 1px solid #44474f; }
.plus { margin-left: 57px; }
.hdots { position: absolute; left: 1154px; top: 13px; display: flex; flex-direction: column; gap: 2px; }
.hdots i { display: block; width: 3px; height: 3px; background: #cfcfcf; }
.hscroll { position: absolute; left: 1178px; top: 12px; width: 717px; height: 20px; background: #141414; border-radius: 4px; display: flex; align-items: center; padding: 0 6px; }
.lf { border-width: 6px 7px 6px 0; border-right-color: #999; }
.hthumb { display: block; width: 269px; height: 11px; border-radius: 5px; background: #9a9a9a; margin-left: 7px; }
.rt { border-width: 6px 0 6px 7px; border-left-color: #999; margin-left: auto; }

/* watermark */
.wm-ar { position: absolute; left: 846px; top: 868px; width: 220px; text-align: right; font: 700 74px "DejaVu Sans", sans-serif; color: #3c3c46; opacity: .11; -webkit-text-stroke: 3px #3c3c46; white-space: nowrap; line-height: 90px; }
.wm-en { position: absolute; left: 860px; top: 949px; font: 700 37px Lato, sans-serif; color: #c4c7d0; letter-spacing: .3px; white-space: nowrap; line-height: 40px; }
```
